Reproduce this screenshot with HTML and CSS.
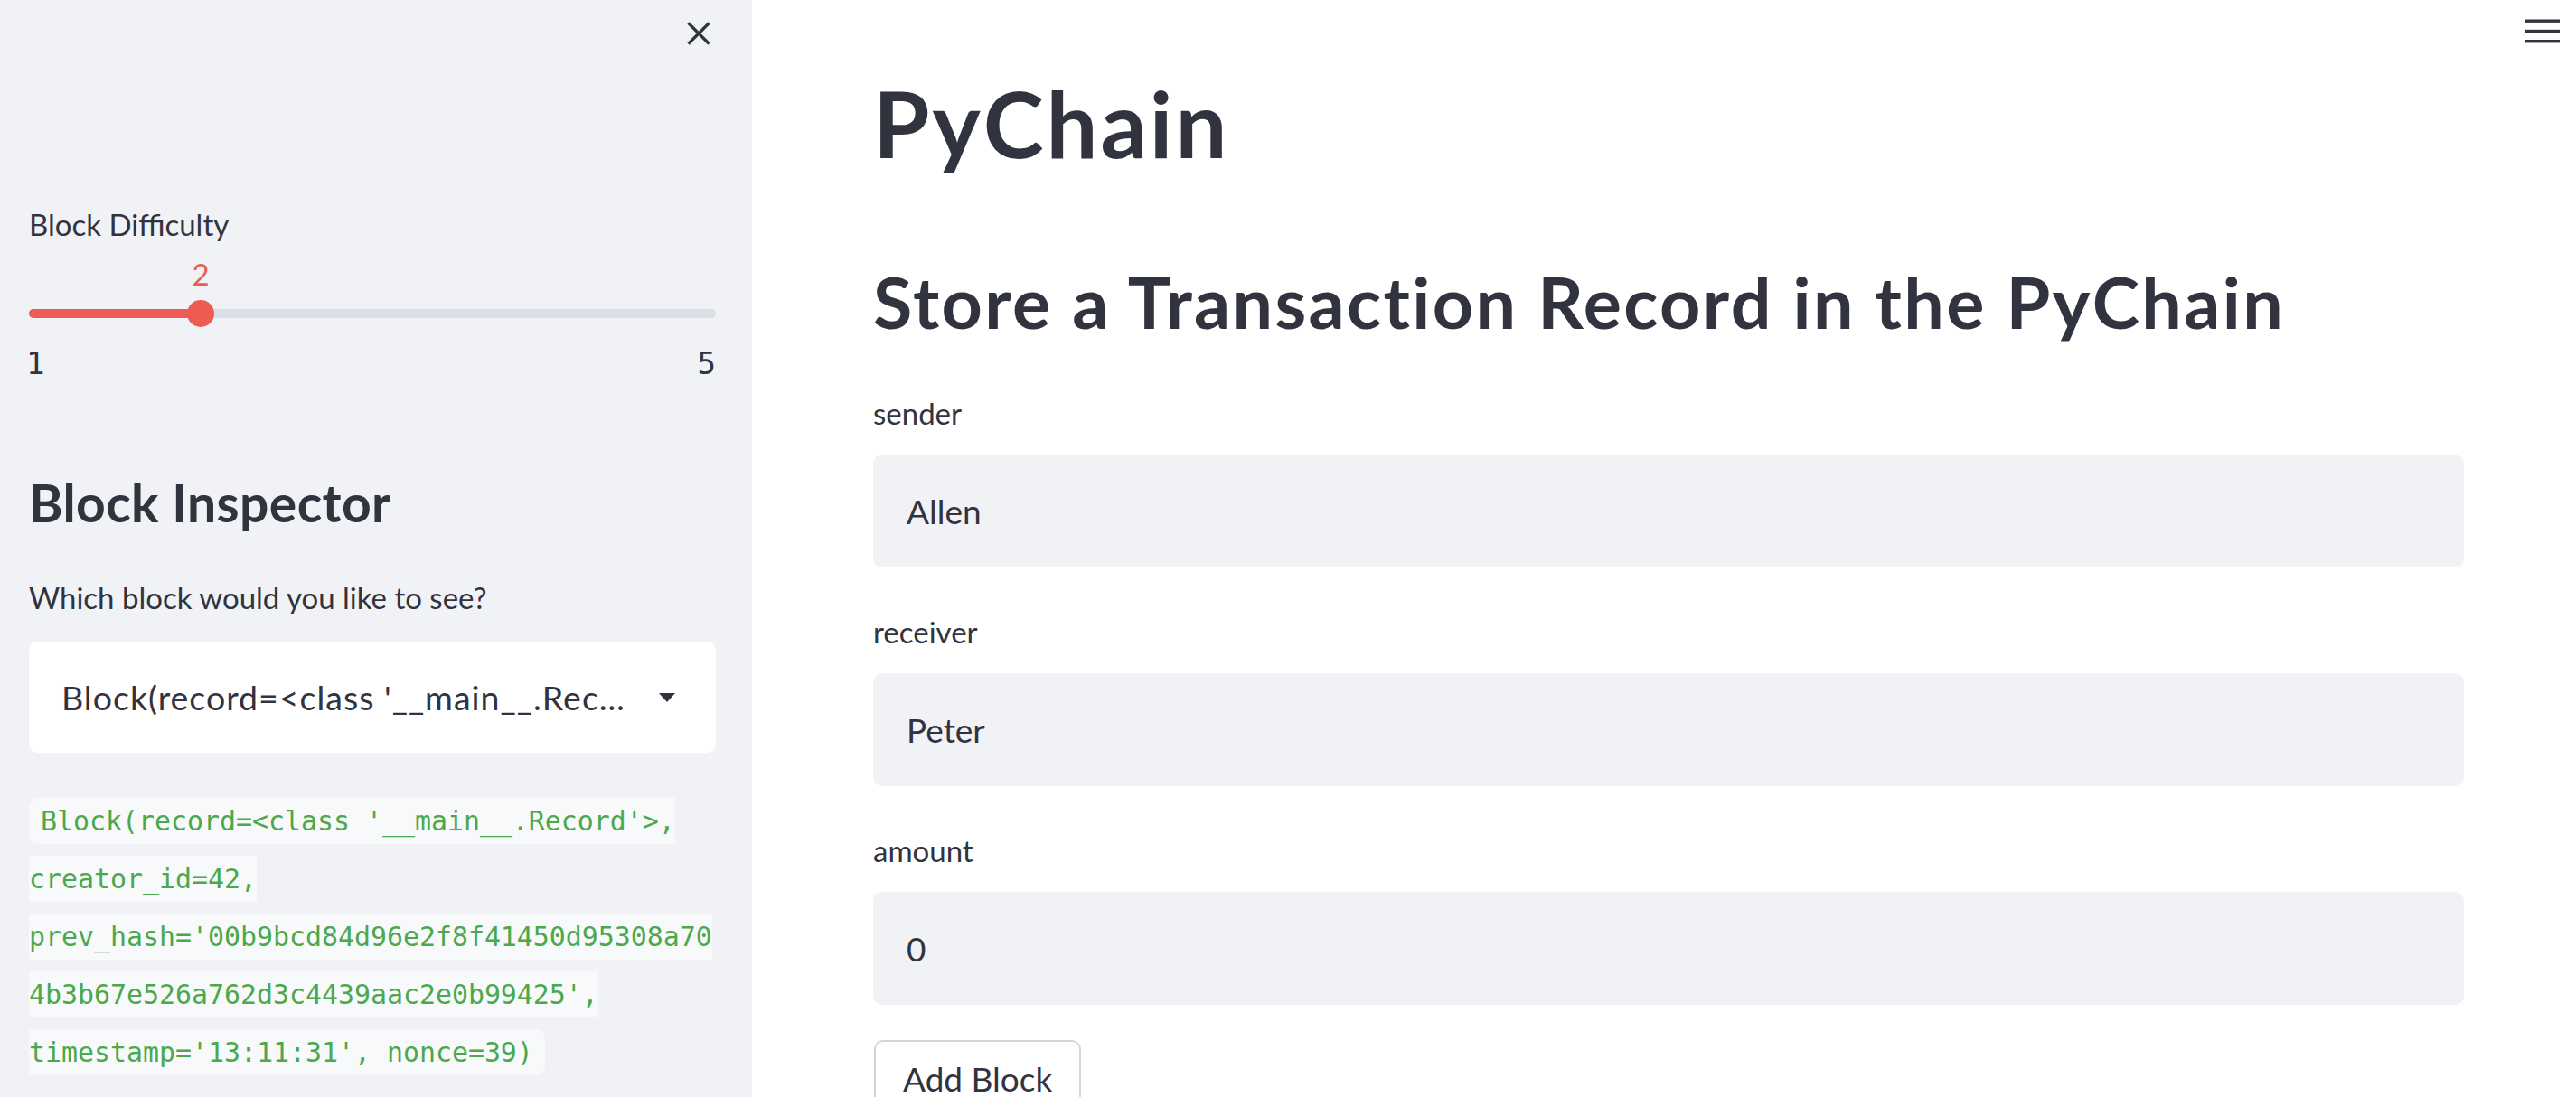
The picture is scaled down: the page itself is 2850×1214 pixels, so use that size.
FILE: index.html
```html
<!DOCTYPE html>
<html lang="en">
<head>
<meta charset="utf-8">
<title>PyChain</title>
<link rel="stylesheet" href="styles.css">
</head>
<body>
<div class="app">
  <aside class="sidebar">
    <div class="sidebar-header">
      <button class="close-btn" aria-label="Close sidebar">
        <svg viewBox="0 0 28 28" width="28" height="28"><path d="M2.5 2.5 L25.5 25.5 M25.5 2.5 L2.5 25.5" stroke="#31333F" stroke-width="3.2" stroke-linecap="butt" fill="none"/></svg>
      </button>
    </div>
    <div class="slider-widget">
      <label class="widget-label slider-label">Block Difficulty</label>
      <div class="slider">
        <div class="track"><div class="fill" style="width:25%"></div></div>
        <div class="thumb" style="left:25%"><span class="thumb-value">2</span></div>
      </div>
      <div class="ticks"><span>1</span><span>5</span></div>
    </div>
    <h2 class="sidebar-title">Block Inspector</h2>
    <label class="widget-label select-label">Which block would you like to see?</label>
    <div class="select">
      <span class="select-value">Block(record=&lt;class '__main__.Rec…</span>
      <svg class="caret" viewBox="0 0 18 10" width="18" height="10"><polygon points="0,0 18,0 9,10" fill="#31333F"/></svg>
    </div>
    <p class="block-output"><code>Block(record=&lt;class '__main__.Record'&gt;, creator_id=42, prev_hash='00b9bcd84d96e2f8f41450d95308a704b3b67e526a762d3c4439aac2e0b99425', timestamp='13:11:31', nonce=39)</code></p>
  </aside>
  <main class="main">
    <header class="toolbar">
      <button class="menu-btn" aria-label="Menu">
        <svg viewBox="0 0 38 27" width="38" height="27"><rect x="0" y="0.5" width="38" height="3.4" fill="#31333F"/><rect x="0" y="11.8" width="38" height="3.4" fill="#31333F"/><rect x="0" y="23" width="38" height="3.4" fill="#31333F"/></svg>
      </button>
    </header>
    <div class="content">
      <h1 class="page-title">PyChain</h1>
      <h2 class="section-title">Store a Transaction Record in the PyChain</h2>
      <div class="form">
        <div class="field">
          <label class="field-label">sender</label>
          <div class="input">Allen</div>
        </div>
        <div class="field">
          <label class="field-label">receiver</label>
          <div class="input">Peter</div>
        </div>
        <div class="field">
          <label class="field-label">amount</label>
          <div class="input">0</div>
        </div>
      </div>
      <button class="btn">Add Block</button>
    </div>
  </main>
</div>
</body>
</html>
```
FILE: styles.css
```css
* { box-sizing: border-box; }
html, body { margin: 0; height: 100%; }
body {
  font-family: Lato, "Noto Sans", sans-serif;
  color: #31333F;
  background: #ffffff;
}
.app { display: flex; height: 100vh; overflow: hidden; }

/* Sidebar */
.sidebar {
  width: 832px;
  flex: none;
  background: #F0F2F6;
  padding: 0 40px 0 32px;
  overflow: hidden;
}
.sidebar-header {
  display: flex;
  justify-content: flex-end;
  height: 74px;
  padding-top: 23px;
}
.close-btn {
  width: 28px;
  height: 28px;
  margin-right: 5px;
  padding: 0;
  border: 0;
  background: none;
}
.close-btn svg { display: block; }

.widget-label { display: block; font-size: 33px; line-height: 44px; }
.slider-label { margin-top: 152px; }

.slider {
  position: relative;
  height: 30px;
  margin-top: 62px;
  display: flex;
  align-items: center;
}
.track { width: 100%; height: 10px; border-radius: 5px; background: #DBDFE8; }
.fill { height: 100%; background: #EE5B53; border-radius: 5px 0 0 5px; }
.thumb {
  position: absolute;
  top: 0;
  width: 30px;
  height: 30px;
  margin-left: -15px;
  border-radius: 50%;
  background: #EE5B53;
}
.thumb-value {
  position: absolute;
  left: 50%;
  bottom: calc(100% + 13px);
  transform: translateX(-50%);
  font-size: 33px;
  line-height: 32px;
  color: #EE5B53;
}
.ticks {
  display: flex;
  justify-content: space-between;
  margin-top: 20px;
  font-family: "DejaVu Sans Mono", monospace;
  font-size: 34px;
  line-height: 40px;
}
.ticks span:first-child { margin-left: -3px; }

.sidebar-title {
  margin: 98px 0 0;
  font-size: 57px;
  line-height: 72px;
  font-weight: 700;
  letter-spacing: 0.4px;
}
.select-label { margin-top: 47px; }

.select {
  margin-top: 27px;
  height: 123px;
  background: #ffffff;
  border-radius: 10px;
  display: flex;
  align-items: center;
  padding: 0 45px 0 36px;
}
.select-value {
  flex: 1;
  min-width: 0;
  font-size: 37.5px;
  line-height: 44px;
  letter-spacing: 1px;
  white-space: nowrap;
  overflow: hidden;
  text-overflow: ellipsis;
}
.caret { flex: none; margin-left: 14px; display: block; }

.block-output {
  margin: 40px 0 0;
  font-size: 37px;
  line-height: 64px;
  overflow-wrap: break-word;
}
.block-output code {
  font-family: "DejaVu Sans Mono", monospace;
  font-size: 29.9px;
  line-height: 1.6;
  color: #4BA84C;
  background: #F8F9FB;
  padding: 8px 13px;
  border-radius: 10px;
}

/* Main */
.main { flex: 1; min-width: 0; display: flex; flex-direction: column; }
.toolbar {
  flex: none;
  display: flex;
  justify-content: flex-end;
  height: 47px;
  padding: 21px 18px 0 0;
}
.menu-btn { padding: 0; border: 0; background: none; width: 38px; height: 27px; }
.menu-btn svg { display: block; }

.content { padding: 0 124px 0 134px; display: flex; flex-direction: column; }
.page-title {
  margin: 29px 0 0;
  font-size: 101px;
  line-height: 120px;
  font-weight: 700;
  letter-spacing: 3px;
}
.section-title {
  margin: 90px 0 0;
  font-size: 79px;
  line-height: 96px;
  font-weight: 700;
  letter-spacing: 2.4px;
}

.form { margin-top: 53px; display: flex; flex-direction: column; gap: 49px; }
.field { display: flex; flex-direction: column; gap: 24px; }
.field-label { font-size: 33px; line-height: 44px; }
.input {
  height: 125px;
  background: #F0F2F6;
  border-radius: 10px;
  display: flex;
  align-items: center;
  padding-left: 37px;
  font-size: 37px;
  line-height: 44px;
}
.btn {
  align-self: flex-start;
  margin: 39px 0 0 1px;
  height: 96px;
  padding: 19px 30px 0;
  border: 2px solid #D6D6D9;
  border-radius: 10px;
  background: #ffffff;
  font-family: Lato, "Noto Sans", sans-serif;
  font-size: 37px;
  line-height: 44px;
  color: #31333F;
  display: flex;
  align-items: flex-start;
}
```
